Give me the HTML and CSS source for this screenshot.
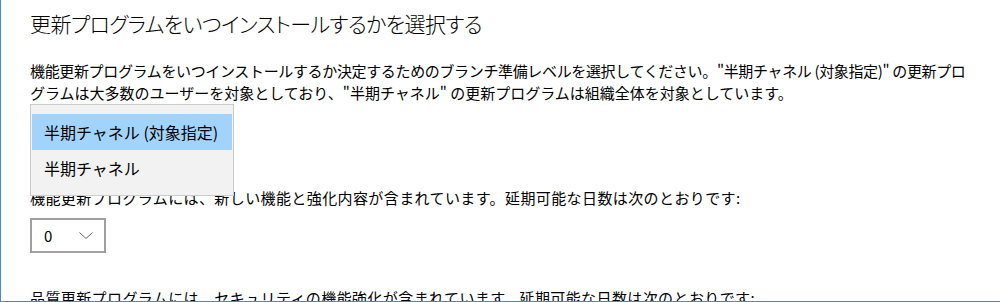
FILE: index.html
```html
<!DOCTYPE html>
<html lang="ja">
<head>
    <meta charset="UTF-8">
    <title>Windows Update の詳細オプション</title>
    <link rel="stylesheet" href="styles.css">
</head>
<body>
    <div class="window">
        <div class="page">
            <h1 class="title">更新プログラムをいつインストールするかを選択する</h1>
            <p class="desc"><span class="desc-first">機能更新プログラムをいつインストールするか決定するためのブランチ準備レベルを選択してください。"半期チャネル (対象指定)" の更新プロ</span><br>グラムは大多数のユーザーを対象としており、"半期チャネル" の更新プログラムは組織全体を対象としています。</p>

            <div class="combo combo-branch"></div>

            <p class="label">機能更新プログラムには、新しい機能と強化内容が含まれています。延期可能な日数は次のとおりです:</p>
            <div class="combo combo-days">
                <span>0</span>
                <svg class="chevron" width="14" height="7" viewBox="0 0 14 7">
                    <polyline points="0.5,0.5 7,6.5 13.5,0.5" fill="none" stroke="#666" stroke-width="1"/>
                </svg>
            </div>

            <p class="label label-quality">品質更新プログラムには、セキュリティの機能強化が含まれています。延期可能な日数は次のとおりです:</p>

            <!-- liste déroulante ouverte -->
            <ul class="popup">
                <li class="selected">半期チャネル (対象指定)</li>
                <li>半期チャネル</li>
            </ul>
        </div>
    </div>
</body>
</html>
```

FILE: styles.css
```css
* {
    box-sizing: border-box;
}

body {
    margin: 0;
    font-family: "Noto Sans CJK JP", "Noto Sans", sans-serif;
    color: #000;
    background: #fff;
}

.window {
    width: 1000px;
    height: 302px;
    border-left: 1px solid #3f8ae0;
    border-bottom: 1px solid #3f8ae0;
    overflow: hidden;
}

.page {
    position: relative;
    padding-left: 29px;
    padding-top: 8px;
}

.title {
    margin: 0;
    font-size: 21px;
    font-weight: 300;
    line-height: 30px;
    letter-spacing: -0.6px;
    font-feature-settings: "palt";
    white-space: nowrap;
}

.desc {
    margin: 22px 0 0;
    font-size: 15px;
    line-height: 22px;
    white-space: nowrap;
}

.desc-first {
    letter-spacing: -0.35px;
}

.combo {
    height: 36px;
}

.combo-branch {
    margin-top: 10px;
}

.label {
    margin: 37px 0 0;
    font-size: 15px;
    line-height: 22px;
    letter-spacing: 0.4px;
    white-space: nowrap;
}

.combo-days {
    margin-top: 9px;
    width: 76px;
    height: 35px;
    border: 2px solid #a0a0a0;
    display: flex;
    align-items: center;
    justify-content: space-between;
    padding: 0 11px 0 12px;
    font-size: 15px;
    letter-spacing: 0;
}

.chevron {
    display: block;
}

.label-quality {
    margin-top: 34px;
}

.popup {
    position: absolute;
    left: 29px;
    top: 104px;
    width: 204px;
    height: 92px;
    margin: 0;
    padding: 9px 1px;
    list-style: none;
    background: #f2f2f2;
    border: 1px solid #cccccc;
}

.popup li {
    height: 36px;
    line-height: 36px;
    padding-left: 12px;
    font-size: 16px;
    white-space: nowrap;
}

.popup .selected {
    background: #a2d4fb;
}
```
